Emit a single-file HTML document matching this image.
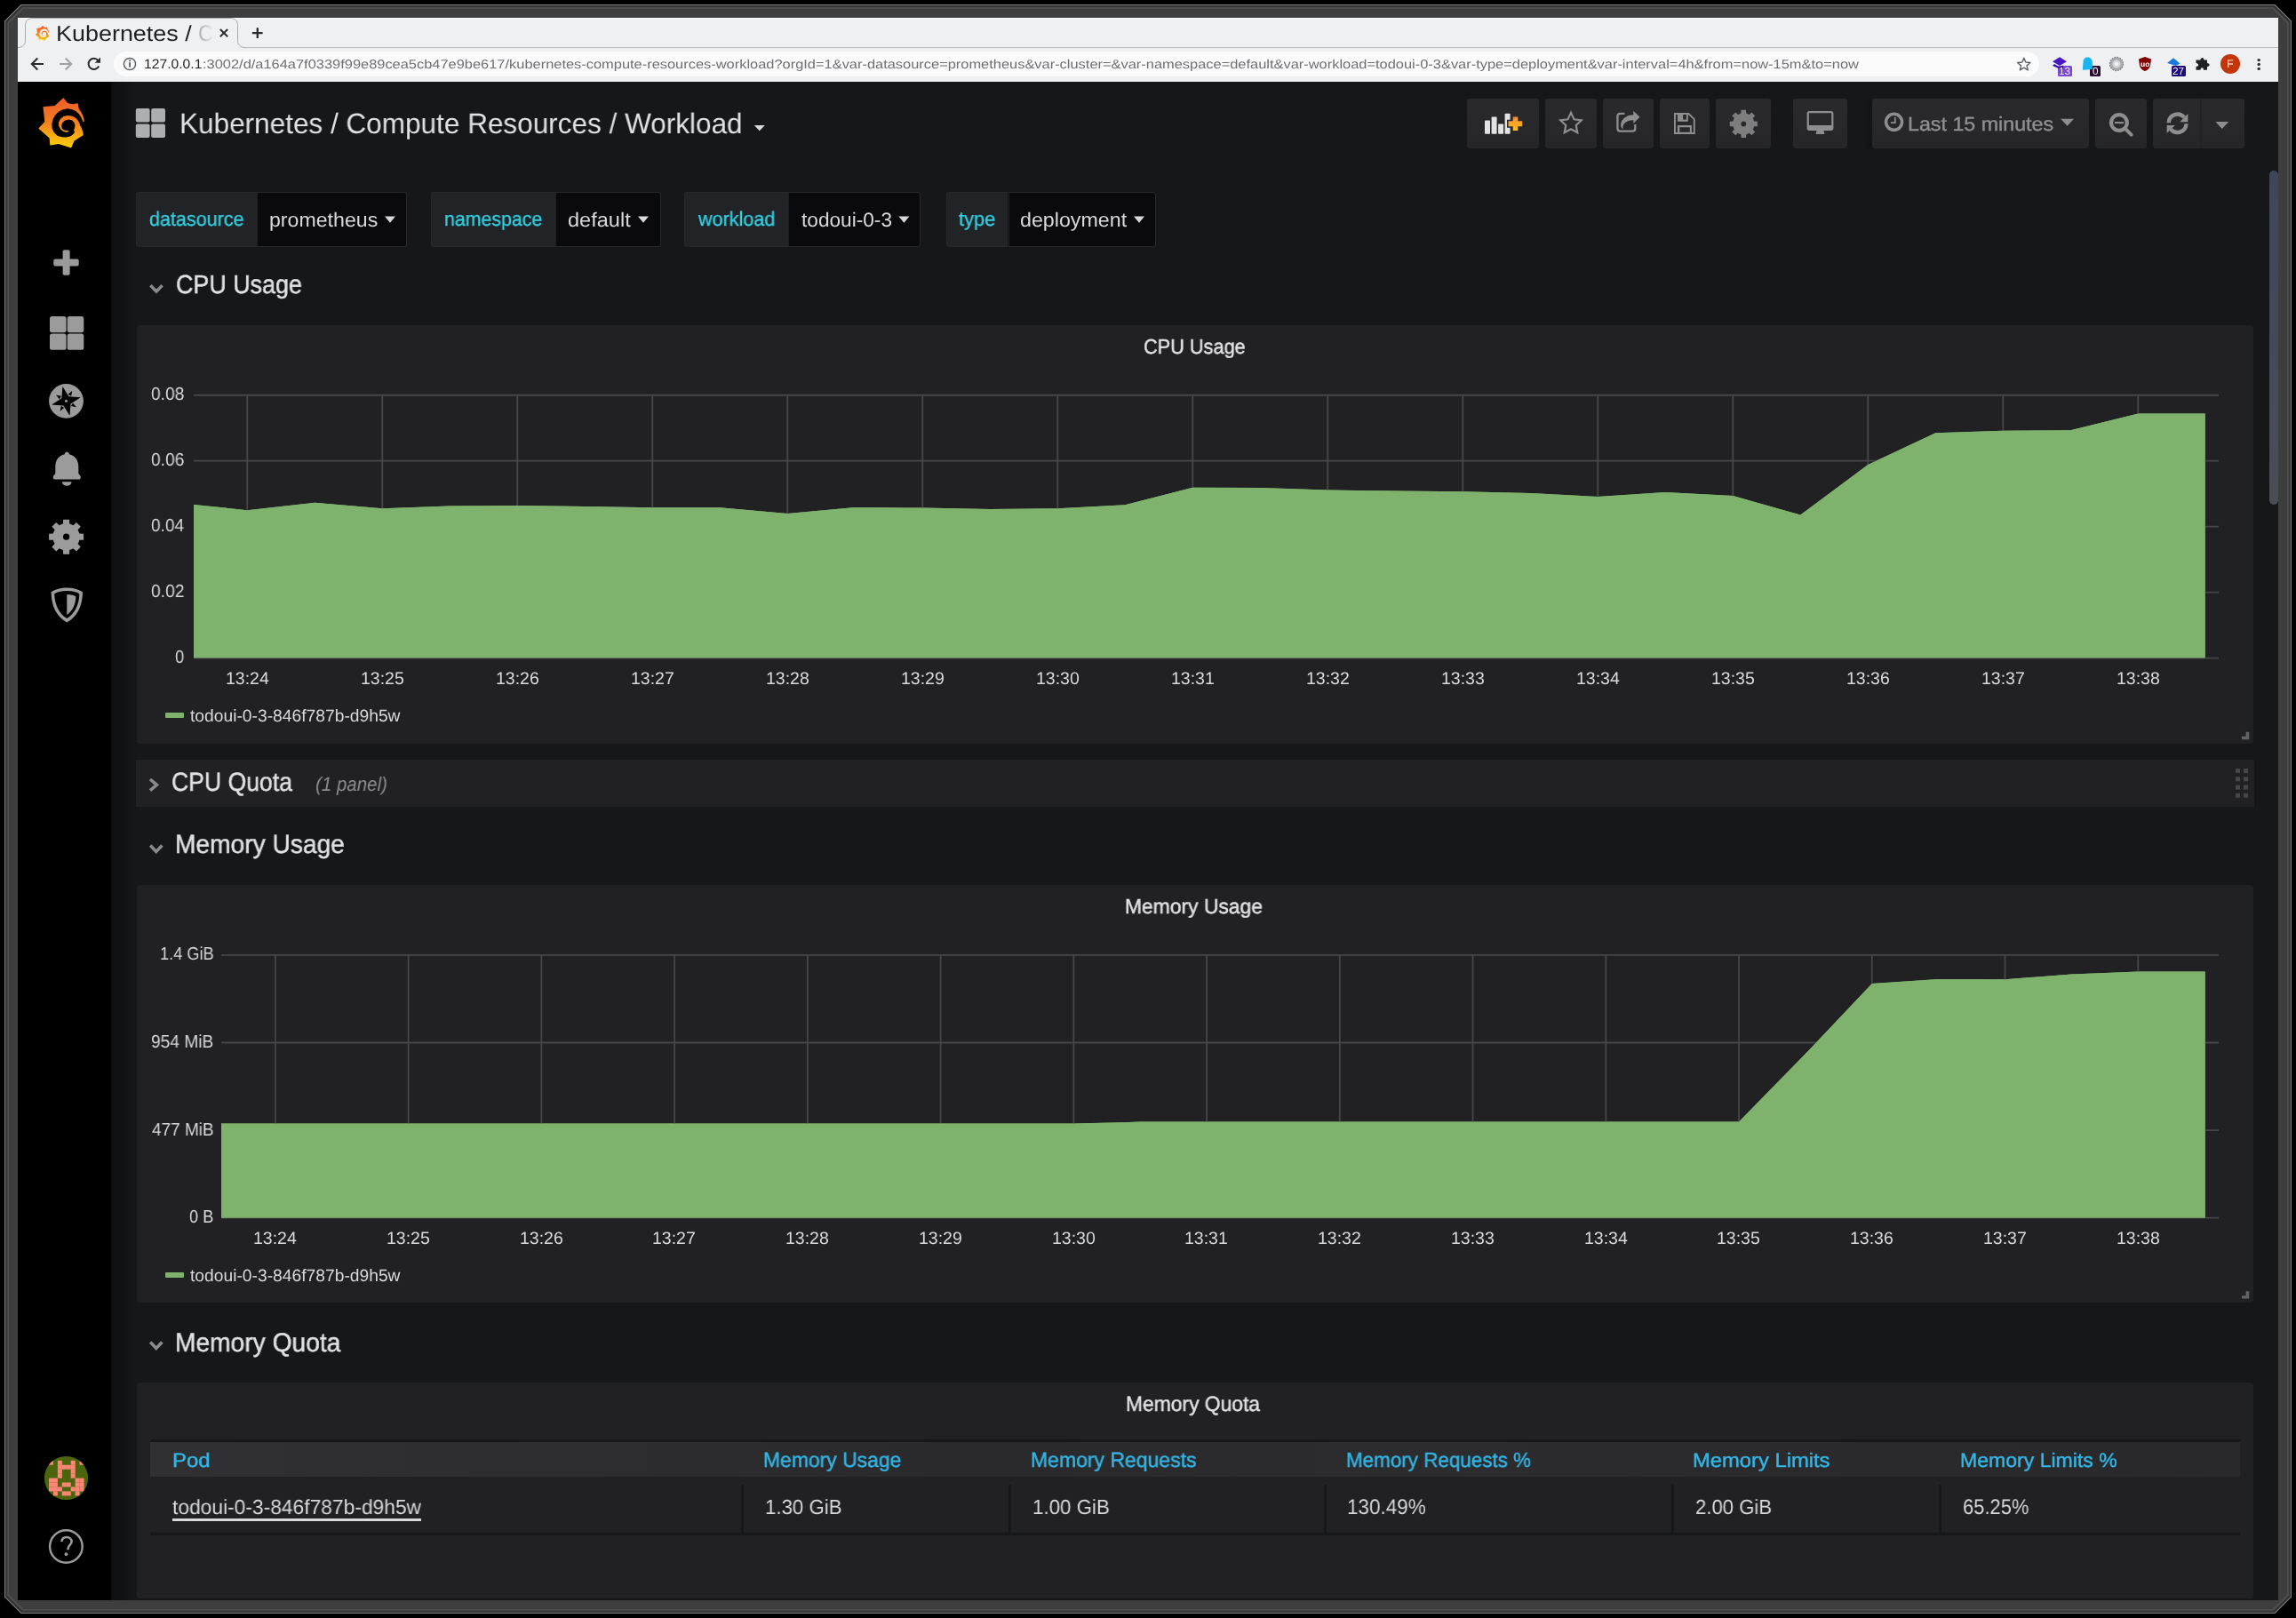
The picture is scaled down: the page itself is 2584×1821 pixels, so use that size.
<!DOCTYPE html>
<html><head><meta charset="utf-8"><title>Kubernetes / Compute Resources / Workload - Grafana</title>
<style>
html,body{margin:0;padding:0;}
body{width:2584px;height:1821px;overflow:hidden;background:#000;position:relative;font-family:"Liberation Sans",sans-serif;}
.b{position:absolute;}
.t{position:absolute;white-space:pre;line-height:1;transform-origin:0 0;will-change:transform;text-rendering:geometricPrecision;}
svg.g{position:absolute;left:0;top:0;}
</style></head><body>
<svg class="g" width="2584" height="1821" viewBox="0 0 2584 1821"><polygon points="23.5,5 2560.5,5 2579,23.5 2579,1797.5 2560.5,1816 23.5,1816 5,1797.5 5,23.5" fill="#7c7c7c"/><polygon points="24.1,6 2559.9,6 2578,24.1 2578,1796.9 2559.9,1815 24.1,1815 6,1796.9 6,24.1" fill="#353535"/><polygon points="25.48,8.3 2558.52,8.3 2575.7,25.48 2575.7,1795.52 2558.52,1812.7 25.48,1812.7 8.3,1795.52 8.3,25.48" fill="#525252"/><polygon points="26.38,9.8 2557.62,9.8 2574.2,26.38 2574.2,1794.62 2557.62,1811.2 26.38,1811.2 9.8,1794.62 9.8,26.38" fill="#3e3e3e"/></svg>
<div class="b" style="left:20px;top:20px;width:2544px;height:72px;background:#eff0f2;"></div>
<div class="b" style="left:20px;top:20px;width:2544px;height:1px;background:#fafbfd;"></div>
<div class="b" style="left:128px;top:58px;width:2167px;height:28px;background:#fbfbfc;border-radius:14px;"></div>
<div class="b" style="left:2316px;top:74px;width:15.7px;height:11.7px;background:#7b46d2;border-radius:1.5px;"></div>
<div class="b" style="left:2352px;top:74px;width:12px;height:11.7px;background:#2e0b34;border-radius:1.5px;"></div>
<div class="b" style="left:2444px;top:74px;width:16px;height:11.7px;background:#1e0c7a;border-radius:1.5px;"></div>
<div class="b" style="left:20px;top:92px;width:2544px;height:1709px;background:#161719;"></div>
<div class="b" style="left:20px;top:92px;width:105px;height:1709px;background:#000000;"></div>
<div class="b" style="left:125px;top:92px;width:30px;height:1709px;background:linear-gradient(90deg,#0d0e10,rgba(22,23,25,0));"></div>
<div class="b" style="left:1651px;top:111px;width:81px;height:56px;background:linear-gradient(180deg,#2a2a2d,#262628);border-radius:3.5px;;"></div>
<div class="b" style="left:1739px;top:111px;width:58px;height:56px;background:linear-gradient(180deg,#2a2a2d,#262628);border-radius:3.5px;;"></div>
<div class="b" style="left:1804px;top:111px;width:57px;height:56px;background:linear-gradient(180deg,#2a2a2d,#262628);border-radius:3.5px;;"></div>
<div class="b" style="left:1868px;top:111px;width:56px;height:56px;background:linear-gradient(180deg,#2a2a2d,#262628);border-radius:3.5px;;"></div>
<div class="b" style="left:1931px;top:111px;width:62px;height:56px;background:linear-gradient(180deg,#2a2a2d,#262628);border-radius:3.5px;;"></div>
<div class="b" style="left:2018px;top:111px;width:61px;height:56px;background:linear-gradient(180deg,#2a2a2d,#262628);border-radius:3.5px;;"></div>
<div class="b" style="left:2107px;top:111px;width:244px;height:56px;background:linear-gradient(180deg,#2a2a2d,#262628);border-radius:3.5px;;"></div>
<div class="b" style="left:2358px;top:111px;width:57.6px;height:56px;background:linear-gradient(180deg,#2a2a2d,#262628);border-radius:3.5px;;"></div>
<div class="b" style="left:2423px;top:111px;width:103px;height:56px;background:linear-gradient(180deg,#2a2a2d,#262628);border-radius:3.5px;;"></div>
<div class="b" style="left:2099.5px;top:111px;width:7.5px;height:56px;background:#131416;border-radius:3px 0 0 3px;"></div>
<div class="b" style="left:153px;top:216.4px;width:136px;height:61.2px;background:#212327;border-radius:3.5px 0 0 3.5px;box-shadow:inset 1px 0 0 #27282c,inset 0 1px 0 #27282c,inset 0 -1px 0 #27282c;"></div>
<div class="b" style="left:289px;top:216.4px;width:169.3px;height:61.2px;background:#0a0a0c;border-radius:0 3.5px 3.5px 0;box-shadow:inset -1px 0 0 #27282c,inset 0 1px 0 #27282c,inset 0 -1px 0 #27282c,inset 1px 0 0 #1d1e22;"></div>
<div class="b" style="left:485px;top:216.4px;width:139.7px;height:61.2px;background:#212327;border-radius:3.5px 0 0 3.5px;box-shadow:inset 1px 0 0 #27282c,inset 0 1px 0 #27282c,inset 0 -1px 0 #27282c;"></div>
<div class="b" style="left:624.7px;top:216.4px;width:118.9px;height:61.2px;background:#0a0a0c;border-radius:0 3.5px 3.5px 0;box-shadow:inset -1px 0 0 #27282c,inset 0 1px 0 #27282c,inset 0 -1px 0 #27282c,inset 1px 0 0 #1d1e22;"></div>
<div class="b" style="left:770px;top:216.4px;width:116.5px;height:61.2px;background:#212327;border-radius:3.5px 0 0 3.5px;box-shadow:inset 1px 0 0 #27282c,inset 0 1px 0 #27282c,inset 0 -1px 0 #27282c;"></div>
<div class="b" style="left:886.5px;top:216.4px;width:149.5px;height:61.2px;background:#0a0a0c;border-radius:0 3.5px 3.5px 0;box-shadow:inset -1px 0 0 #27282c,inset 0 1px 0 #27282c,inset 0 -1px 0 #27282c,inset 1px 0 0 #1d1e22;"></div>
<div class="b" style="left:1064.8px;top:216.4px;width:69.7px;height:61.2px;background:#212327;border-radius:3.5px 0 0 3.5px;box-shadow:inset 1px 0 0 #27282c,inset 0 1px 0 #27282c,inset 0 -1px 0 #27282c;"></div>
<div class="b" style="left:1134.5px;top:216.4px;width:166px;height:61.2px;background:#0a0a0c;border-radius:0 3.5px 3.5px 0;box-shadow:inset -1px 0 0 #27282c,inset 0 1px 0 #27282c,inset 0 -1px 0 #27282c,inset 1px 0 0 #1d1e22;"></div>
<div class="b" style="left:153px;top:855px;width:2384px;height:52.8px;background:#212124;"></div>
<div class="b" style="left:154px;top:366px;width:2382px;height:470.6px;background:#212124;border-radius:3.5px;"></div>
<div class="b" style="left:154px;top:996px;width:2382px;height:470px;background:#212124;border-radius:3.5px;"></div>
<div class="b" style="left:154px;top:1556px;width:2382px;height:243px;background:#212124;border-radius:3.5px;"></div>
<div class="b" style="left:186px;top:802px;width:20.7px;height:6px;background:#7eb26d;border-radius:1px;"></div>
<div class="b" style="left:186px;top:1432px;width:20.7px;height:6px;background:#7eb26d;border-radius:1px;"></div>
<div class="b" style="left:168.9px;top:1619.6px;width:2352.3px;height:3.2px;background:#161719;"></div>
<div class="b" style="left:168.9px;top:1622.8px;width:2352.3px;height:39.2px;background:linear-gradient(90deg,#303033,#2a2a2d 40%,#2c2c2f 60%,#29292c);"></div>
<div class="b" style="left:834.2px;top:1670.6px;width:3.1px;height:54.2px;background:#161719;"></div>
<div class="b" style="left:1135.2px;top:1670.6px;width:3.1px;height:54.2px;background:#161719;"></div>
<div class="b" style="left:1489.5px;top:1670.6px;width:3.1px;height:54.2px;background:#161719;"></div>
<div class="b" style="left:1881px;top:1670.6px;width:3.1px;height:54.2px;background:#161719;"></div>
<div class="b" style="left:2182.1px;top:1670.6px;width:3.1px;height:54.2px;background:#161719;"></div>
<div class="b" style="left:168.9px;top:1724.7px;width:2352.3px;height:3.1px;background:#161719;"></div>
<div class="b" style="left:194px;top:1709.4px;width:280px;height:2.2px;background:#d8d9da;"></div>
<div class="b" style="left:2554px;top:192px;width:10px;height:376.4px;background:linear-gradient(180deg,#3f465a,#4b4d54);border-radius:5px;;"></div>
<svg class="g" width="2584" height="1821" viewBox="0 0 2584 1821">
<line x1="276" y1="53.5" x2="2564" y2="53.5" stroke="#b9babc" stroke-width="1"/>
<path d="M20,53.5 C25.5,53.5 28.5,50.5 28.5,45.5 L28.5,28.5 C28.5,23.5 31.5,20.5 36.5,20.5 L259.5,20.5 C264.5,20.5 267.5,23.5 267.5,28.5 L267.5,45.5 C267.5,50.5 270.5,53.5 276,53.5" fill="#eff0f2" stroke="#a9aaac" stroke-width="1"/>
<defs><linearGradient id="lg1" x1="0" y1="0" x2="0" y2="1"><stop offset="0" stop-color="#f05a28"/><stop offset="0.5" stop-color="#f3821f"/><stop offset="1" stop-color="#fbcf0a"/></linearGradient></defs><g transform="translate(36,104) scale(1)"><polygon points="35.30,6.90 39.70,12.60 45.80,13.90 51.10,13.00 52.10,18.90 54.60,22.30 56.50,26.10 57.80,30.30 58.00,33.20 54.20,37.80 56.60,44.40 57.10,47.60 46.90,54.20 43.70,61.60 29.40,57.20 21.00,58.80 20.20,50.90 8.20,40.40 15.10,33.20 13.20,16.80 26.10,15.60" fill="url(#lg1)" stroke="url(#lg1)" stroke-width="1.4" stroke-linejoin="round"/><polygon points="57.58,33.31 55.60,28.86 52.88,24.16 49.17,20.94 44.72,18.97 39.78,18.35 34.83,19.21 30.38,21.44 26.43,25.15 23.71,29.84 22.35,35.28 22.72,40.72 24.94,45.17 28.65,48.63 33.60,50.36 38.54,50.61 43.49,49.13 46.70,46.66 47.94,44.92 47.19,42.21 48.18,39.49 48.43,37.01 47.44,33.80 44.72,31.33 41.01,30.59 37.31,31.57 34.34,34.05 33.10,37.51 33.84,40.72 36.07,42.45 39.28,42.95 41.76,42.95 39.78,44.68 35.82,44.18 32.36,41.71 30.14,37.76 30.14,33.31 32.11,29.84 35.33,27.12 39.78,25.89 44.72,26.38 48.92,28.61 52.14,32.07 53.87,35.78 54.12,37.76 62.00,37.76 62.00,33.00" fill="#000"/></g>
<defs><linearGradient id="lg2" x1="0" y1="0" x2="0" y2="1"><stop offset="0" stop-color="#f05a28"/><stop offset="0.5" stop-color="#f3821f"/><stop offset="1" stop-color="#fbcf0a"/></linearGradient></defs><g transform="translate(37.6,26.93) scale(0.3)"><polygon points="35.30,6.90 39.70,12.60 45.80,13.90 51.10,13.00 52.10,18.90 54.60,22.30 56.50,26.10 57.80,30.30 58.00,33.20 54.20,37.80 56.60,44.40 57.10,47.60 46.90,54.20 43.70,61.60 29.40,57.20 21.00,58.80 20.20,50.90 8.20,40.40 15.10,33.20 13.20,16.80 26.10,15.60" fill="url(#lg2)" stroke="url(#lg2)" stroke-width="1.4" stroke-linejoin="round"/><polygon points="57.58,33.31 55.60,28.86 52.88,24.16 49.17,20.94 44.72,18.97 39.78,18.35 34.83,19.21 30.38,21.44 26.43,25.15 23.71,29.84 22.35,35.28 22.72,40.72 24.94,45.17 28.65,48.63 33.60,50.36 38.54,50.61 43.49,49.13 46.70,46.66 47.94,44.92 47.19,42.21 48.18,39.49 48.43,37.01 47.44,33.80 44.72,31.33 41.01,30.59 37.31,31.57 34.34,34.05 33.10,37.51 33.84,40.72 36.07,42.45 39.28,42.95 41.76,42.95 39.78,44.68 35.82,44.18 32.36,41.71 30.14,37.76 30.14,33.31 32.11,29.84 35.33,27.12 39.78,25.89 44.72,26.38 48.92,28.61 52.14,32.07 53.87,35.78 54.12,37.76 62.00,37.76 62.00,33.00" fill="#eff0f2"/></g>
<path d="M247.8,33 L256.2,41.2 M256.2,33 L247.8,41.2" stroke="#2b2b2b" stroke-width="2"/>
<path d="M289.8,31.3 L289.8,43.1 M283.9,37.2 L295.6,37.2" stroke="#2b2b2b" stroke-width="2.3"/>
<path d="M49,72 L36.5,72 M42.3,65.5 L35.8,72 L42.3,78.5" fill="none" stroke="#2a2b2e" stroke-width="2"/>
<path d="M67,72 L79.5,72 M73.7,65.5 L80.2,72 L73.7,78.5" fill="none" stroke="#a0a1a3" stroke-width="2"/>
<path d="M111.2,74.5 A6.1,6.1 0 1 1 110.4,68" fill="none" stroke="#2a2b2e" stroke-width="2"/>
<polygon points="113,64.5 113,70.8 106.7,70.8" fill="#2a2b2e"/>
<circle cx="146" cy="72" r="6.6" fill="none" stroke="#5f6368" stroke-width="1.5"/>
<rect x="145.1" y="70.2" width="1.9" height="5.4" fill="#5f6368"/><rect x="145.1" y="67.4" width="1.9" height="1.8" fill="#5f6368"/>
<polygon points="2277.80,65.20 2279.80,70.05 2285.03,70.45 2281.03,73.85 2282.27,78.95 2277.80,76.20 2273.33,78.95 2274.57,73.85 2270.57,70.45 2275.80,70.05" fill="none" stroke="#5f6368" stroke-width="1.4" stroke-linejoin="round"/>
<polygon points="2318,64.3 2326,69.3 2318,74 2310,69.3" fill="#4a17c4"/><polygon points="2312,72 2318,75.5 2322,73.5 2322,77.6 2318,77.6 2310,74" fill="#3a10a8"/>
<path d="M2343.8,78.8 L2344.5,70 C2344.5,66.5 2346.8,64.6 2349.5,64.6 C2352.3,64.6 2354.8,66.5 2354.8,70 L2354.8,78 Z" fill="#19b5f1"/>
<circle cx="2382" cy="72" r="7.6" fill="#a9a9a9" stroke="#7d7d7d" stroke-width="1.2" stroke-dasharray="1.6,1.4"/><circle cx="2382" cy="72" r="4.6" fill="#d6d6d6"/><circle cx="2382" cy="72" r="2" fill="#f2f2f2"/>
<path d="M2407,66.5 L2414,64 L2421,66.5 L2420,74 C2419,77.5 2416.5,79 2414,80 C2411.5,79 2409,77.5 2408,74 Z" fill="#800000"/>
<path d="M2439,71 L2446,65.3 L2453.5,71.5 L2449,74 Z" fill="#1a7bdc"/>
<path d="M2473,67.5 L2476.5,67.5 C2476.5,64 2480.5,64 2480.5,67.5 L2484,67.5 L2484,71 C2487.5,71 2487.5,75 2484,75 L2484,78.8 L2480,78.8 C2480,75.5 2476.5,75.5 2476.5,78.8 L2471.5,78.8 L2471.5,75 C2475,75 2475,71 2471.5,71 L2471.5,67.5 Z" fill="#202124"/>
<circle cx="2510" cy="71.9" r="11" fill="#c2360d"/>
<circle cx="2542.2" cy="67.6" r="1.7" fill="#2b2b2b"/>
<circle cx="2542.2" cy="72.4" r="1.7" fill="#2b2b2b"/>
<circle cx="2542.2" cy="77.4" r="1.7" fill="#2b2b2b"/>
<rect x="70.6" y="281.3" width="8" height="28.4" rx="2" fill="#9b9b9b"/><rect x="60.3" y="291.5" width="28.4" height="8" rx="2" fill="#9b9b9b"/>
<rect x="56" y="356" width="18.6" height="18.2" rx="2.6" fill="#9b9b9b"/>
<rect x="75.7" y="356" width="18.6" height="18.2" rx="2.6" fill="#9b9b9b"/>
<rect x="56" y="375.6" width="18.6" height="18.2" rx="2.6" fill="#9b9b9b"/>
<rect x="75.7" y="375.6" width="18.6" height="18.2" rx="2.6" fill="#9b9b9b"/>
<circle cx="74.5" cy="451.35" r="19.4" fill="#9b9b9b"/>
<polygon points="70.39,435.05 77.49,446.29 90.75,447.29 79.51,454.39 78.51,467.65 71.41,456.41 58.15,455.41 69.39,448.31" fill="#000"/>
<polygon points="80.08,445.87 76.65,443.81 81.35,439.86" fill="#000"/>
<polygon points="79.93,456.98 81.99,453.55 85.94,458.25" fill="#000"/>
<polygon points="68.82,456.83 72.25,458.89 67.55,462.84" fill="#000"/>
<polygon points="68.97,445.72 66.91,449.15 62.96,444.45" fill="#000"/>
<circle cx="74.45" cy="451.35" r="1.5" fill="#9b9b9b"/>
<path d="M75.3,508.8 C77,508.8 77.8,510 77.8,511.2 C84.5,512.8 88.3,518 88.3,525 L88.3,532.5 C88.3,534 90.9,535 90.9,537 C90.9,538.6 90,539.6 88.6,539.6 L62,539.6 C60.6,539.6 59.7,538.6 59.7,537 C59.7,535 62.3,534 62.3,532.5 L62.3,525 C62.3,518 66,512.8 72.8,511.2 C72.8,510 73.6,508.8 75.3,508.8 Z" fill="#9b9b9b"/>
<path d="M70,542.2 L80.5,542.2 C80.5,545 78.5,546.8 75.3,546.8 C72,546.8 70,545 70,542.2 Z" fill="#9b9b9b"/>
<path d="M68.78,590.16 L70.94,589.45 L71.15,584.70 L78.05,584.70 L78.26,589.45 L80.42,590.16 L82.44,591.18 L85.94,587.97 L90.83,592.86 L87.62,596.36 L88.64,598.38 L89.35,600.54 L94.10,600.75 L94.10,607.65 L89.35,607.86 L88.64,610.02 L87.62,612.04 L90.83,615.54 L85.94,620.43 L82.44,617.22 L80.42,618.24 L78.26,618.95 L78.05,623.70 L71.15,623.70 L70.94,618.95 L68.78,618.24 L66.76,617.22 L63.26,620.43 L58.37,615.54 L61.58,612.04 L60.56,610.02 L59.85,607.86 L55.10,607.65 L55.10,600.75 L59.85,600.54 L60.56,598.38 L61.58,596.36 L58.37,592.86 L63.26,587.97 L66.76,591.18 Z M78.20,604.20 A3.6,3.6 0 1 0 71.00,604.20 A3.6,3.6 0 1 0 78.20,604.20 Z" fill="#9b9b9b" fill-rule="evenodd"/>
<path d="M75.3,661.5 C82,661.5 88.5,663.5 93,666.2 C93,683 86,694.5 75.3,700.5 C64.6,694.5 57.6,683 57.6,666.2 C62,663.5 68.6,661.5 75.3,661.5 Z M75.3,665 C69.5,665 65,666.2 61.2,668.2 C61.6,681.5 67,691 75.3,696 C83.6,691 89,681.5 89.4,668.2 C85.6,666.2 81,665 75.3,665 Z" fill="#9b9b9b" fill-rule="evenodd"/>
<path d="M75.3,669 L75.3,692 C81.5,687.5 85,681 85.4,671.2 C82.5,669.8 79,669 75.3,669 Z" fill="#9b9b9b"/>
<defs><clipPath id="avc"><circle cx="74.5" cy="1663.5" r="24.6"/></clipPath></defs>
<g clip-path="url(#avc)"><rect x="49" y="1638" width="52" height="52" fill="#4b650c"/>
<rect x="55.00" y="1643.80" width="5.0" height="4.98" fill="#fe8577"/>
<rect x="64.88" y="1643.80" width="5.0" height="4.98" fill="#fe8577"/>
<rect x="79.70" y="1643.80" width="5.0" height="4.98" fill="#fe8577"/>
<rect x="89.58" y="1643.80" width="5.0" height="4.98" fill="#fe8577"/>
<rect x="64.88" y="1648.74" width="5.0" height="4.98" fill="#fe8577"/>
<rect x="69.82" y="1648.74" width="5.0" height="4.98" fill="#fe8577"/>
<rect x="74.76" y="1648.74" width="5.0" height="4.98" fill="#fe8577"/>
<rect x="79.70" y="1648.74" width="5.0" height="4.98" fill="#fe8577"/>
<rect x="64.88" y="1653.68" width="5.0" height="4.98" fill="#fe8577"/>
<rect x="79.70" y="1653.68" width="5.0" height="4.98" fill="#fe8577"/>
<rect x="64.88" y="1658.62" width="5.0" height="4.98" fill="#fe8577"/>
<rect x="79.70" y="1658.62" width="5.0" height="4.98" fill="#fe8577"/>
<rect x="55.00" y="1663.56" width="5.0" height="4.98" fill="#fe8577"/>
<rect x="59.94" y="1663.56" width="5.0" height="4.98" fill="#fe8577"/>
<rect x="84.64" y="1663.56" width="5.0" height="4.98" fill="#fe8577"/>
<rect x="89.58" y="1663.56" width="5.0" height="4.98" fill="#fe8577"/>
<rect x="55.00" y="1668.50" width="5.0" height="4.98" fill="#fe8577"/>
<rect x="59.94" y="1668.50" width="5.0" height="4.98" fill="#fe8577"/>
<rect x="69.82" y="1668.50" width="5.0" height="4.98" fill="#fe8577"/>
<rect x="74.76" y="1668.50" width="5.0" height="4.98" fill="#fe8577"/>
<rect x="84.64" y="1668.50" width="5.0" height="4.98" fill="#fe8577"/>
<rect x="89.58" y="1668.50" width="5.0" height="4.98" fill="#fe8577"/>
<rect x="55.00" y="1673.44" width="5.0" height="4.98" fill="#fe8577"/>
<rect x="59.94" y="1673.44" width="5.0" height="4.98" fill="#fe8577"/>
<rect x="64.88" y="1673.44" width="5.0" height="4.98" fill="#fe8577"/>
<rect x="79.70" y="1673.44" width="5.0" height="4.98" fill="#fe8577"/>
<rect x="84.64" y="1673.44" width="5.0" height="4.98" fill="#fe8577"/>
<rect x="89.58" y="1673.44" width="5.0" height="4.98" fill="#fe8577"/>
<rect x="59.94" y="1678.38" width="5.0" height="4.98" fill="#fe8577"/>
<rect x="69.82" y="1678.38" width="5.0" height="4.98" fill="#fe8577"/>
<rect x="74.76" y="1678.38" width="5.0" height="4.98" fill="#fe8577"/>
<rect x="84.64" y="1678.38" width="5.0" height="4.98" fill="#fe8577"/>
</g>
<circle cx="74.4" cy="1740.5" r="18.3" fill="none" stroke="#9b9b9b" stroke-width="2.4"/>
<path d="M69.4,1735.2 C69.8,1731.5 72.2,1730 75,1730 C78.2,1730 80.6,1732 80.6,1735 C80.6,1738.6 76.6,1739.4 76.6,1742.4 L76.6,1744.3" fill="none" stroke="#9b9b9b" stroke-width="2.6"/>
<circle cx="74.5" cy="1749.2" r="1.9" fill="#9b9b9b"/>
<rect x="152.8" y="122" width="15.8" height="15.4" rx="2" fill="#adaeaf"/>
<rect x="170.2" y="122" width="15.8" height="15.4" rx="2" fill="#adaeaf"/>
<rect x="152.8" y="139.6" width="15.8" height="15.4" rx="2" fill="#adaeaf"/>
<rect x="170.2" y="139.6" width="15.8" height="15.4" rx="2" fill="#adaeaf"/>
<polygon points="848.8,141 860.8,141 854.8,147.2" fill="#d8d9da"/>
<line x1="2477" y1="111" x2="2477" y2="167" stroke="#1d1d1f" stroke-width="1"/>
<rect x="1671" y="135.6" width="6" height="15.2" rx="0.8" fill="#e3e3e3"/>
<rect x="1678.6" y="131.6" width="6" height="19.2" rx="0.8" fill="#e3e3e3"/>
<rect x="1686.1" y="139.4" width="6" height="11.4" rx="0.8" fill="#e3e3e3"/>
<rect x="1693.6" y="127.8" width="6" height="23" rx="0.8" fill="#e3e3e3"/>
<defs><linearGradient id="og" x1="0" y1="0" x2="0" y2="1"><stop offset="0" stop-color="#f38d3c"/><stop offset="1" stop-color="#fdc10f"/></linearGradient></defs>
<path d="M1701.2,130.1 h8.6 v4.6 h4.9 v9 h-4.9 v4.8 h-8.6 v-4.8 h-5.2 v-9 h5.2 Z" fill="#29292c"/>
<path d="M1702.7,131.6 h5.6 v4.6 h4.9 v6 h-4.9 v4.8 h-5.6 v-4.8 h-5.2 v-6 h5.2 Z" fill="url(#og)"/>
<polygon points="1768.00,126.80 1771.53,134.35 1779.79,135.37 1773.71,141.05 1775.29,149.23 1768.00,145.20 1760.71,149.23 1762.29,141.05 1756.21,135.37 1764.47,134.35" fill="none" stroke="#8e8e8e" stroke-width="2.2" stroke-linejoin="miter"/>
<path d="M1828.4,127.9 L1823.6,127.9 C1821.8,127.9 1820.4,129.3 1820.4,131.1 L1820.4,144.5 C1820.4,146.3 1821.8,147.7 1823.6,147.7 L1837.1,147.7 C1838.9,147.7 1840.3,146.3 1840.3,144.5 L1840.3,139.9" fill="none" stroke="#8e8e8e" stroke-width="2.3"/>
<path d="M1845.5,131.8 L1838.3,124.8 L1838.3,129.2 C1830.5,129.4 1825.3,133.5 1824.2,139.2 C1823.7,142 1824.7,144.2 1826.3,145.3 C1826.1,140.5 1828.5,135.3 1838.3,135.3 L1838.3,138.9 Z" fill="#8e8e8e"/>
<path d="M1884,127 L1900.8,127 L1907.7,133.8 L1907.7,150.9 L1884,150.9 Z M1885.9,128.9 L1885.9,149 L1905.8,149 L1905.8,134.6 L1900,128.9 Z" fill="#8e8e8e" fill-rule="evenodd"/>
<path d="M1887.9,128.9 L1899.8,128.9 L1899.8,136.8 L1887.9,136.8 Z M1894.1,129.1 L1894.1,134.6 L1897.9,134.6 L1897.9,129.1 Z" fill="#8e8e8e" fill-rule="evenodd"/>
<path d="M1887.9,141.1 L1903.9,141.1 L1903.9,149.5 L1887.9,149.5 Z M1890.3,143.3 L1890.3,148.8 L1901.8,148.8 L1901.8,143.3 Z" fill="#8e8e8e" fill-rule="evenodd"/>
<path d="M1957.63,128.13 L1959.36,127.56 L1959.54,123.84 L1965.06,123.84 L1965.24,127.56 L1966.97,128.13 L1968.59,128.95 L1971.35,126.45 L1975.25,130.35 L1972.75,133.11 L1973.57,134.73 L1974.14,136.46 L1977.86,136.64 L1977.86,142.16 L1974.14,142.34 L1973.57,144.07 L1972.75,145.69 L1975.25,148.45 L1971.35,152.35 L1968.59,149.85 L1966.97,150.67 L1965.24,151.24 L1965.06,154.96 L1959.54,154.96 L1959.36,151.24 L1957.63,150.67 L1956.01,149.85 L1953.25,152.35 L1949.35,148.45 L1951.85,145.69 L1951.03,144.07 L1950.46,142.34 L1946.74,142.16 L1946.74,136.64 L1950.46,136.46 L1951.03,134.73 L1951.85,133.11 L1949.35,130.35 L1953.25,126.45 L1956.01,128.95 Z M1965.20,139.40 A2.9,2.9 0 1 0 1959.40,139.40 A2.9,2.9 0 1 0 1965.20,139.40 Z" fill="#7e7e7e" fill-rule="evenodd"/>
<path d="M2036.1,124.9 L2060.9,124.9 C2062.3,124.9 2063.4,126 2063.4,127.4 L2063.4,144.5 C2063.4,145.9 2062.3,147 2060.9,147 L2036.1,147 C2034.7,147 2033.6,145.9 2033.6,144.5 L2033.6,127.4 C2033.6,126 2034.7,124.9 2036.1,124.9 Z M2035.9,127.2 L2035.9,141 L2061.2,141 L2061.2,127.2 Z" fill="#8e8e8e" fill-rule="evenodd"/>
<polygon points="2044.6,146.5 2052.4,146.5 2053.4,150.9 2043.6,150.9" fill="#8e8e8e"/>
<circle cx="2131.55" cy="137.3" r="9" fill="none" stroke="#8e8e8e" stroke-width="3.5"/>
<path d="M2132.8,132 L2132.8,138.1 L2127.9,138.1" fill="none" stroke="#8e8e8e" stroke-width="1.7"/>
<polygon points="2319.2,133.8 2334,133.8 2326.6,141.8" fill="#8e8e8e"/>
<circle cx="2384.9" cy="138" r="8.9" fill="none" stroke="#8e8e8e" stroke-width="4.2"/>
<line x1="2392" y1="145" x2="2398.6" y2="151.6" stroke="#8e8e8e" stroke-width="4" stroke-linecap="round"/>
<rect x="2379.9" y="137" width="10.1" height="2.1" fill="#8e8e8e"/>
<path d="M2440.7,138.3 A9.9,9.9 0 0 1 2458.2,132.2" fill="none" stroke="#8e8e8e" stroke-width="4.4"/>
<polygon points="2462.4,127.9 2462.4,137.3 2453.2,137.3" fill="#8e8e8e"/>
<path d="M2460.5,139.2 A9.9,9.9 0 0 1 2443,145.4" fill="none" stroke="#8e8e8e" stroke-width="4.4"/>
<polygon points="2438.7,149.8 2438.7,141.1 2447.9,141.1" fill="#8e8e8e"/>
<polygon points="2493.4,137 2508.2,137 2500.8,145" fill="#8e8e8e"/>
<polygon points="433,243.4 445,243.4 439,250.8" fill="#d8d9da"/>
<polygon points="718,243.4 730,243.4 724,250.8" fill="#d8d9da"/>
<polygon points="1011.4,243.4 1023.4,243.4 1017.4,250.8" fill="#d8d9da"/>
<polygon points="1276,243.4 1288,243.4 1282,250.8" fill="#d8d9da"/>
<path d="M169.4,321.2 L176,328 L182.6,321.2" fill="none" stroke="#8a8a8a" stroke-width="3.6"/>
<path d="M169,877 L176.4,883.3 L169,889.6" fill="none" stroke="#8a8a8a" stroke-width="3.6"/>
<rect x="2516" y="865" width="5" height="5" fill="#464648"/>
<rect x="2516" y="874.3" width="5" height="5" fill="#464648"/>
<rect x="2516" y="883.6" width="5" height="5" fill="#464648"/>
<rect x="2516" y="892.8" width="5" height="5" fill="#464648"/>
<rect x="2525" y="865" width="5" height="5" fill="#464648"/>
<rect x="2525" y="874.3" width="5" height="5" fill="#464648"/>
<rect x="2525" y="883.6" width="5" height="5" fill="#464648"/>
<rect x="2525" y="892.8" width="5" height="5" fill="#464648"/>
<path d="M169.2,951.6 L175.8,958.4 L182.4,951.6" fill="none" stroke="#8a8a8a" stroke-width="3.6"/>
<path d="M169.2,1510.6 L175.8,1517.4 L182.4,1510.6" fill="none" stroke="#8a8a8a" stroke-width="3.6"/>
<path d="M2527.6,823.8 h3.6 v8.4 h-8.2 v-3.4 h4.6 Z" fill="#636365"/>
<path d="M2527.6,1453.2 h3.6 v8.4 h-8.2 v-3.4 h4.6 Z" fill="#636365"/>
<polygon points="218.00,740.60 218.00,567.90 278.26,574.20 354.26,565.70 430.26,572.30 506.26,569.40 582.26,569.00 658.26,570.00 734.26,571.20 810.26,571.20 886.26,577.90 962.26,571.00 1038.26,571.60 1114.26,572.90 1190.26,572.30 1266.26,568.30 1342.26,548.80 1418.26,549.00 1494.26,551.50 1570.26,552.60 1646.26,553.20 1722.26,555.00 1798.26,559.00 1874.26,554.00 1950.26,558.00 2026.26,579.40 2102.26,523.00 2178.26,487.30 2254.26,484.70 2330.26,484.20 2406.26,465.40 2481.70,465.40 2481.70,740.60" fill="#7eb26d"/>
<line x1="218" y1="444.76" x2="2497" y2="444.76" stroke="#464648" stroke-width="1.8"/>
<line x1="218" y1="518.7" x2="2497" y2="518.7" stroke="#464648" stroke-width="1.8"/>
<line x1="218" y1="592.6" x2="2497" y2="592.6" stroke="#464648" stroke-width="1.8"/>
<line x1="218" y1="666.6" x2="2497" y2="666.6" stroke="#464648" stroke-width="1.8"/>
<line x1="218" y1="740.6" x2="2497" y2="740.6" stroke="#464648" stroke-width="1.8"/>
<line x1="278.26" y1="444.76" x2="278.26" y2="740.6" stroke="#464648" stroke-width="1.8"/>
<line x1="430.26" y1="444.76" x2="430.26" y2="740.6" stroke="#464648" stroke-width="1.8"/>
<line x1="582.26" y1="444.76" x2="582.26" y2="740.6" stroke="#464648" stroke-width="1.8"/>
<line x1="734.26" y1="444.76" x2="734.26" y2="740.6" stroke="#464648" stroke-width="1.8"/>
<line x1="886.26" y1="444.76" x2="886.26" y2="740.6" stroke="#464648" stroke-width="1.8"/>
<line x1="1038.26" y1="444.76" x2="1038.26" y2="740.6" stroke="#464648" stroke-width="1.8"/>
<line x1="1190.26" y1="444.76" x2="1190.26" y2="740.6" stroke="#464648" stroke-width="1.8"/>
<line x1="1342.26" y1="444.76" x2="1342.26" y2="740.6" stroke="#464648" stroke-width="1.8"/>
<line x1="1494.26" y1="444.76" x2="1494.26" y2="740.6" stroke="#464648" stroke-width="1.8"/>
<line x1="1646.26" y1="444.76" x2="1646.26" y2="740.6" stroke="#464648" stroke-width="1.8"/>
<line x1="1798.26" y1="444.76" x2="1798.26" y2="740.6" stroke="#464648" stroke-width="1.8"/>
<line x1="1950.26" y1="444.76" x2="1950.26" y2="740.6" stroke="#464648" stroke-width="1.8"/>
<line x1="2102.26" y1="444.76" x2="2102.26" y2="740.6" stroke="#464648" stroke-width="1.8"/>
<line x1="2254.26" y1="444.76" x2="2254.26" y2="740.6" stroke="#464648" stroke-width="1.8"/>
<line x1="2406.26" y1="444.76" x2="2406.26" y2="740.6" stroke="#464648" stroke-width="1.8"/>
<polygon points="218.00,740.60 218.00,567.90 278.26,574.20 354.26,565.70 430.26,572.30 506.26,569.40 582.26,569.00 658.26,570.00 734.26,571.20 810.26,571.20 886.26,577.90 962.26,571.00 1038.26,571.60 1114.26,572.90 1190.26,572.30 1266.26,568.30 1342.26,548.80 1418.26,549.00 1494.26,551.50 1570.26,552.60 1646.26,553.20 1722.26,555.00 1798.26,559.00 1874.26,554.00 1950.26,558.00 2026.26,579.40 2102.26,523.00 2178.26,487.30 2254.26,484.70 2330.26,484.20 2406.26,465.40 2481.70,465.40 2481.70,740.60" fill="#7eb26d"/>
<polygon points="249.00,1370.70 249.00,1264.50 309.90,1264.50 384.77,1264.50 459.64,1264.50 534.51,1264.50 609.38,1264.50 684.25,1264.50 759.12,1264.50 833.99,1264.50 908.86,1264.50 983.73,1264.50 1058.60,1264.50 1133.47,1264.50 1208.34,1264.50 1283.21,1262.60 1358.08,1262.60 1432.95,1262.60 1507.82,1262.60 1582.69,1262.60 1657.56,1262.60 1732.43,1262.60 1807.30,1262.60 1882.17,1262.60 1957.04,1262.60 2031.91,1186.00 2106.78,1106.90 2181.65,1101.90 2256.52,1102.20 2331.39,1096.60 2406.26,1093.50 2481.70,1093.50 2481.70,1370.70" fill="#7eb26d"/>
<line x1="249" y1="1074.9" x2="2497" y2="1074.9" stroke="#464648" stroke-width="1.8"/>
<line x1="249" y1="1173.5" x2="2497" y2="1173.5" stroke="#464648" stroke-width="1.8"/>
<line x1="249" y1="1272.1" x2="2497" y2="1272.1" stroke="#464648" stroke-width="1.8"/>
<line x1="249" y1="1370.7" x2="2497" y2="1370.7" stroke="#464648" stroke-width="1.8"/>
<line x1="309.90" y1="1074.9" x2="309.90" y2="1370.7" stroke="#464648" stroke-width="1.8"/>
<line x1="459.64" y1="1074.9" x2="459.64" y2="1370.7" stroke="#464648" stroke-width="1.8"/>
<line x1="609.38" y1="1074.9" x2="609.38" y2="1370.7" stroke="#464648" stroke-width="1.8"/>
<line x1="759.12" y1="1074.9" x2="759.12" y2="1370.7" stroke="#464648" stroke-width="1.8"/>
<line x1="908.86" y1="1074.9" x2="908.86" y2="1370.7" stroke="#464648" stroke-width="1.8"/>
<line x1="1058.60" y1="1074.9" x2="1058.60" y2="1370.7" stroke="#464648" stroke-width="1.8"/>
<line x1="1208.34" y1="1074.9" x2="1208.34" y2="1370.7" stroke="#464648" stroke-width="1.8"/>
<line x1="1358.08" y1="1074.9" x2="1358.08" y2="1370.7" stroke="#464648" stroke-width="1.8"/>
<line x1="1507.82" y1="1074.9" x2="1507.82" y2="1370.7" stroke="#464648" stroke-width="1.8"/>
<line x1="1657.56" y1="1074.9" x2="1657.56" y2="1370.7" stroke="#464648" stroke-width="1.8"/>
<line x1="1807.30" y1="1074.9" x2="1807.30" y2="1370.7" stroke="#464648" stroke-width="1.8"/>
<line x1="1957.04" y1="1074.9" x2="1957.04" y2="1370.7" stroke="#464648" stroke-width="1.8"/>
<line x1="2106.78" y1="1074.9" x2="2106.78" y2="1370.7" stroke="#464648" stroke-width="1.8"/>
<line x1="2256.52" y1="1074.9" x2="2256.52" y2="1370.7" stroke="#464648" stroke-width="1.8"/>
<line x1="2406.26" y1="1074.9" x2="2406.26" y2="1370.7" stroke="#464648" stroke-width="1.8"/>
<polygon points="249.00,1370.70 249.00,1264.50 309.90,1264.50 384.77,1264.50 459.64,1264.50 534.51,1264.50 609.38,1264.50 684.25,1264.50 759.12,1264.50 833.99,1264.50 908.86,1264.50 983.73,1264.50 1058.60,1264.50 1133.47,1264.50 1208.34,1264.50 1283.21,1262.60 1358.08,1262.60 1432.95,1262.60 1507.82,1262.60 1582.69,1262.60 1657.56,1262.60 1732.43,1262.60 1807.30,1262.60 1882.17,1262.60 1957.04,1262.60 2031.91,1186.00 2106.78,1106.90 2181.65,1101.90 2256.52,1102.20 2331.39,1096.60 2406.26,1093.50 2481.70,1093.50 2481.70,1370.70" fill="#7eb26d"/>
</svg>
<div class="t" style="left:62.78px;top:27px;font-size:24.5px;color:#1f2023;transform:scaleX(1.0994);">Kubernetes / </div>
<div class="t" style="left:223.35px;top:26px;font-size:25.5px;color:#1f2023;transform:scaleX(0.8990);opacity:0.3;">C</div>
<div class="b" style="left:226px;top:24px;width:18px;height:28px;background:linear-gradient(90deg,rgba(239,240,242,0),#eff0f2 85%)"></div>
<div class="t" style="left:2317.14px;top:75px;font-size:11.75px;color:#ece6f8;">13</div>
<div class="t" style="left:2354.72px;top:75px;font-size:11.75px;color:#f0f0f0;">0</div>
<div class="t" style="left:2408.71px;top:68px;font-size:8.5px;color:#ffffff;font-weight:bold;">uo</div>
<div class="t" style="left:2445.48px;top:75px;font-size:11.75px;color:#f0f0ff;">27</div>
<div class="t" style="left:2505.92px;top:66px;font-size:12.5px;color:#ffffff;">F</div>
<div class="t" style="left:161.82px;top:65px;font-size:15px;color:#202124;transform:scaleX(1.0459);">127.0.0.1</div>
<div class="t" style="left:227.98px;top:66px;font-size:14.25px;color:#6e6f72;transform:scaleX(1.1520);">:3002/d/a164a7f0339f99e89cea5cb47e9be617/kubernetes-compute-resources-workload?orgId=1&amp;var-datasource=prometheus&amp;var-cluster=&amp;var-namespace=default&amp;var-workload=todoui-0-3&amp;var-type=deployment&amp;var-interval=4h&amp;from=now-15m&amp;to=now</div>
<div class="t" style="left:202.40px;top:123px;font-size:32.25px;color:#e2e2e3;transform:scaleX(0.9773);">Kubernetes / Compute Resources / Workload</div>
<div class="t" style="left:2146.68px;top:129px;font-size:22px;color:#8f8f90;transform:scaleX(1.0567);-webkit-text-stroke:0.4px #8f8f90;">Last 15 minutes</div>
<div class="t" style="left:168.28px;top:236px;font-size:22.5px;color:#33cfe0;transform:scaleX(0.9579);-webkit-text-stroke:0.35px #33cfe0;">datasource</div>
<div class="t" style="left:303.20px;top:237px;font-size:22.5px;color:#d8d9da;transform:scaleX(1.0287);">prometheus</div>
<div class="t" style="left:499.56px;top:236px;font-size:22.5px;color:#33cfe0;transform:scaleX(0.9486);-webkit-text-stroke:0.35px #33cfe0;">namespace</div>
<div class="t" style="left:639.00px;top:237px;font-size:22.5px;color:#d8d9da;transform:scaleX(1.0462);">default</div>
<div class="t" style="left:786.00px;top:236px;font-size:22.5px;color:#33cfe0;transform:scaleX(0.9594);-webkit-text-stroke:0.35px #33cfe0;">workload</div>
<div class="t" style="left:901.66px;top:237px;font-size:22.5px;color:#d8d9da;transform:scaleX(1.0069);">todoui-0-3</div>
<div class="t" style="left:1078.67px;top:236px;font-size:22.5px;color:#33cfe0;transform:scaleX(0.9701);-webkit-text-stroke:0.35px #33cfe0;">type</div>
<div class="t" style="left:1148.01px;top:237px;font-size:22.5px;color:#d8d9da;transform:scaleX(1.0330);">deployment</div>
<div class="t" style="left:197.66px;top:307px;font-size:29.25px;color:#e2e2e3;transform:scaleX(0.9181);-webkit-text-stroke:0.45px #e2e2e3;">CPU Usage</div>
<div class="t" style="left:193.07px;top:866px;font-size:29.5px;color:#e2e2e3;transform:scaleX(0.9013);-webkit-text-stroke:0.45px #e2e2e3;">CPU Quota</div>
<div class="t" style="left:354.73px;top:872px;font-size:22.25px;color:#8e8e8e;font-style:italic;transform:scaleX(0.9211);">(1 panel)</div>
<div class="t" style="left:197.28px;top:936px;font-size:29.5px;color:#e2e2e3;transform:scaleX(0.9546);-webkit-text-stroke:0.45px #e2e2e3;">Memory Usage</div>
<div class="t" style="left:196.88px;top:1497px;font-size:29.75px;color:#e2e2e3;transform:scaleX(0.9471);-webkit-text-stroke:0.45px #e2e2e3;">Memory Quota</div>
<div class="t" style="left:1286.51px;top:379px;font-size:23.25px;color:#e2e2e3;transform:scaleX(0.9344);-webkit-text-stroke:0.45px #e2e2e3;">CPU Usage</div>
<div class="t" style="left:1265.91px;top:1009px;font-size:23.25px;color:#e2e2e3;transform:scaleX(0.9830);-webkit-text-stroke:0.45px #e2e2e3;">Memory Usage</div>
<div class="t" style="left:1267.42px;top:1569px;font-size:23.75px;color:#e2e2e3;transform:scaleX(0.9620);-webkit-text-stroke:0.45px #e2e2e3;">Memory Quota</div>
<div class="t" style="left:170.23px;top:434px;font-size:20.25px;color:#d8d9da;transform:scaleX(0.9466);">0.08</div>
<div class="t" style="left:170.23px;top:508px;font-size:20.25px;color:#d8d9da;transform:scaleX(0.9466);">0.06</div>
<div class="t" style="left:170.24px;top:582px;font-size:20.25px;color:#d8d9da;transform:scaleX(0.9390);">0.04</div>
<div class="t" style="left:170.23px;top:656px;font-size:20.25px;color:#d8d9da;transform:scaleX(0.9504);">0.02</div>
<div class="t" style="left:197.13px;top:730px;font-size:20.25px;color:#d8d9da;transform:scaleX(0.9134);">0</div>
<div class="t" style="left:253.61px;top:755px;font-size:19.5px;color:#d8d9da;transform:scaleX(0.9915);">13:24</div>
<div class="t" style="left:405.60px;top:755px;font-size:19.5px;color:#d8d9da;transform:scaleX(0.9966);">13:25</div>
<div class="t" style="left:557.60px;top:755px;font-size:19.5px;color:#d8d9da;transform:scaleX(0.9977);">13:26</div>
<div class="t" style="left:709.60px;top:755px;font-size:19.5px;color:#d8d9da;">13:27</div>
<div class="t" style="left:861.60px;top:755px;font-size:19.5px;color:#d8d9da;transform:scaleX(0.9977);">13:28</div>
<div class="t" style="left:1013.60px;top:755px;font-size:19.5px;color:#d8d9da;">13:29</div>
<div class="t" style="left:1165.60px;top:755px;font-size:19.5px;color:#d8d9da;transform:scaleX(0.9956);">13:30</div>
<div class="t" style="left:1317.60px;top:755px;font-size:19.5px;color:#d8d9da;">13:31</div>
<div class="t" style="left:1469.60px;top:755px;font-size:19.5px;color:#d8d9da;">13:32</div>
<div class="t" style="left:1621.60px;top:755px;font-size:19.5px;color:#d8d9da;transform:scaleX(0.9977);">13:33</div>
<div class="t" style="left:1773.61px;top:755px;font-size:19.5px;color:#d8d9da;transform:scaleX(0.9915);">13:34</div>
<div class="t" style="left:1925.60px;top:755px;font-size:19.5px;color:#d8d9da;transform:scaleX(0.9966);">13:35</div>
<div class="t" style="left:2077.60px;top:755px;font-size:19.5px;color:#d8d9da;transform:scaleX(0.9977);">13:36</div>
<div class="t" style="left:2229.60px;top:755px;font-size:19.5px;color:#d8d9da;">13:37</div>
<div class="t" style="left:2381.60px;top:755px;font-size:19.5px;color:#d8d9da;transform:scaleX(0.9977);">13:38</div>
<div class="t" style="left:213.71px;top:797px;font-size:19.25px;color:#d8d9da;">todoui-0-3-846f787b-d9h5w</div>
<div class="t" style="left:179.73px;top:1064px;font-size:20.25px;color:#d8d9da;transform:scaleX(0.8991);">1.4 GiB</div>
<div class="t" style="left:170.19px;top:1163px;font-size:20.25px;color:#d8d9da;transform:scaleX(0.9462);">954 MiB</div>
<div class="t" style="left:170.87px;top:1262px;font-size:20.25px;color:#d8d9da;transform:scaleX(0.9368);">477 MiB</div>
<div class="t" style="left:213.17px;top:1360px;font-size:20.25px;color:#d8d9da;transform:scaleX(0.8966);">0 B</div>
<div class="t" style="left:285.25px;top:1385px;font-size:19.5px;color:#d8d9da;transform:scaleX(0.9915);">13:24</div>
<div class="t" style="left:434.98px;top:1385px;font-size:19.5px;color:#d8d9da;transform:scaleX(0.9966);">13:25</div>
<div class="t" style="left:584.72px;top:1385px;font-size:19.5px;color:#d8d9da;transform:scaleX(0.9977);">13:26</div>
<div class="t" style="left:734.46px;top:1385px;font-size:19.5px;color:#d8d9da;">13:27</div>
<div class="t" style="left:884.20px;top:1385px;font-size:19.5px;color:#d8d9da;transform:scaleX(0.9977);">13:28</div>
<div class="t" style="left:1033.94px;top:1385px;font-size:19.5px;color:#d8d9da;">13:29</div>
<div class="t" style="left:1183.68px;top:1385px;font-size:19.5px;color:#d8d9da;transform:scaleX(0.9956);">13:30</div>
<div class="t" style="left:1333.42px;top:1385px;font-size:19.5px;color:#d8d9da;">13:31</div>
<div class="t" style="left:1483.16px;top:1385px;font-size:19.5px;color:#d8d9da;">13:32</div>
<div class="t" style="left:1632.90px;top:1385px;font-size:19.5px;color:#d8d9da;transform:scaleX(0.9977);">13:33</div>
<div class="t" style="left:1782.65px;top:1385px;font-size:19.5px;color:#d8d9da;transform:scaleX(0.9915);">13:34</div>
<div class="t" style="left:1932.38px;top:1385px;font-size:19.5px;color:#d8d9da;transform:scaleX(0.9966);">13:35</div>
<div class="t" style="left:2082.12px;top:1385px;font-size:19.5px;color:#d8d9da;transform:scaleX(0.9977);">13:36</div>
<div class="t" style="left:2231.86px;top:1385px;font-size:19.5px;color:#d8d9da;">13:37</div>
<div class="t" style="left:2381.60px;top:1385px;font-size:19.5px;color:#d8d9da;transform:scaleX(0.9977);">13:38</div>
<div class="t" style="left:213.71px;top:1427px;font-size:19.25px;color:#d8d9da;">todoui-0-3-846f787b-d9h5w</div>
<div class="t" style="left:193.72px;top:1633px;font-size:22.25px;color:#33b5e5;transform:scaleX(1.0764);-webkit-text-stroke:0.45px #33b5e5;">Pod</div>
<div class="t" style="left:858.51px;top:1632px;font-size:23.5px;color:#33b5e5;transform:scaleX(0.9751);-webkit-text-stroke:0.45px #33b5e5;">Memory Usage</div>
<div class="t" style="left:1160.30px;top:1632px;font-size:23.5px;color:#33b5e5;transform:scaleX(0.9780);-webkit-text-stroke:0.45px #33b5e5;">Memory Requests</div>
<div class="t" style="left:1514.95px;top:1632px;font-size:23.25px;color:#33b5e5;transform:scaleX(0.9642);-webkit-text-stroke:0.45px #33b5e5;">Memory Requests %</div>
<div class="t" style="left:1905.04px;top:1633px;font-size:22.25px;color:#33b5e5;transform:scaleX(1.0682);-webkit-text-stroke:0.45px #33b5e5;">Memory Limits</div>
<div class="t" style="left:2206.10px;top:1633px;font-size:22.25px;color:#33b5e5;transform:scaleX(1.0361);-webkit-text-stroke:0.45px #33b5e5;">Memory Limits %</div>
<div class="t" style="left:193.66px;top:1685px;font-size:23.25px;color:#d8d9da;transform:scaleX(0.9804);">todoui-0-3-846f787b-d9h5w</div>
<div class="t" style="left:860.63px;top:1685px;font-size:23.25px;color:#d8d9da;transform:scaleX(0.9562);">1.30 GiB</div>
<div class="t" style="left:1162.33px;top:1685px;font-size:23.25px;color:#d8d9da;transform:scaleX(0.9596);">1.00 GiB</div>
<div class="t" style="left:1516.11px;top:1685px;font-size:24px;color:#d8d9da;transform:scaleX(0.9365);">130.49%</div>
<div class="t" style="left:1907.89px;top:1685px;font-size:23.25px;color:#d8d9da;transform:scaleX(0.9510);">2.00 GiB</div>
<div class="t" style="left:2208.90px;top:1685px;font-size:24px;color:#d8d9da;transform:scaleX(0.9153);">65.25%</div>
</body></html>
